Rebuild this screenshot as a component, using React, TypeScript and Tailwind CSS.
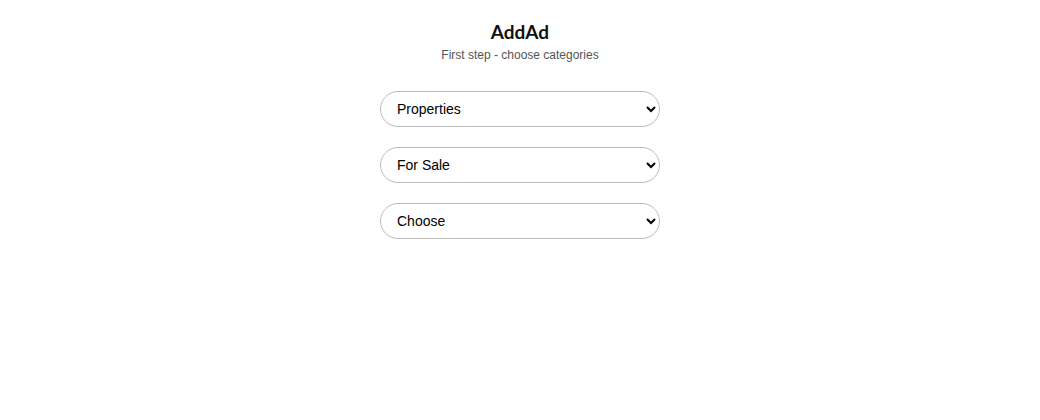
import React, { useState } from 'react';

const steps = [
  { key: 'category', value: 'properties', options: [['properties', 'Properties'], ['vehicles', 'Vehicles'], ['jobs', 'Jobs']] },
  { key: 'type', value: 'sale', options: [['sale', 'For Sale'], ['rent', 'For Rent']] },
  { key: 'sub', value: '', options: [['', 'Choose'], ['apartment', 'Apartment'], ['house', 'House']] },
];

export default function App() {
  const [values, setValues] = useState<Record<string, string>>(
    Object.fromEntries(steps.map((s) => [s.key, s.value]))
  );

  return (
    <div className="min-h-screen bg-white flex flex-col items-center pt-[18px]" style={{ fontFamily: '"Liberation Sans", Arial, sans-serif' }}>
      <h1 className="text-[19px] leading-7 font-bold text-[#111]" style={{ fontFamily: 'Lato, sans-serif' }}>
        AddAd
      </h1>
      <p className="text-xs text-[#555] mt-[1px]">First step - choose categories</p>

      <div className="flex flex-col gap-5 mt-[28px] w-[280px]">
        {steps.map((s) => (
          <select
            key={s.key}
            value={values[s.key]}
            onChange={(e) => setValues((v) => ({ ...v, [s.key]: e.target.value }))}
            className="h-9 w-full rounded-full border border-[#bbb] bg-white pl-3 pr-2 text-sm text-black outline-none"
          >
            {s.options.map(([val, label]) => (
              <option key={val} value={val}>
                {label}
              </option>
            ))}
          </select>
        ))}
      </div>
    </div>
  );
}
